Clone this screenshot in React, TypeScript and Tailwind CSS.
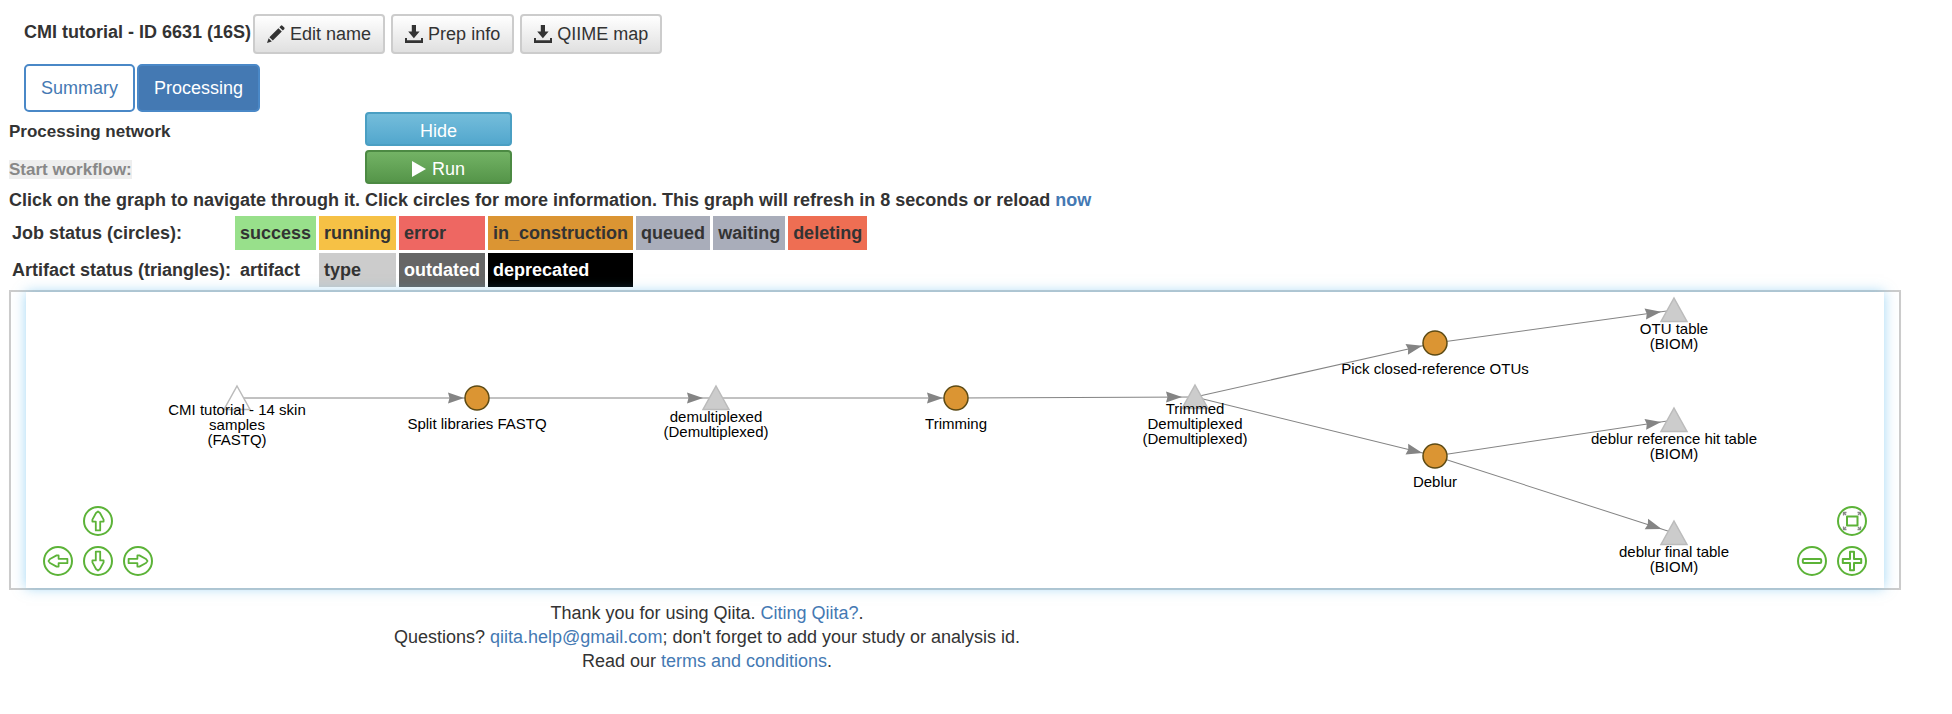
import type { ReactNode } from "react";

type Kind = "job" | "artifact" | "type";

interface GraphNode {
  id: string;
  kind: Kind;
  x: number;
  y: number;
  label: string[];
}

const nodes: GraphNode[] = [
  { id: "fastq", kind: "artifact", x: 211, y: 106, label: ["CMI tutorial - 14 skin", "samples", "(FASTQ)"] },
  { id: "split", kind: "job", x: 451, y: 106, label: ["Split libraries FASTQ"] },
  { id: "demux", kind: "type", x: 690, y: 106, label: ["demultiplexed", "(Demultiplexed)"] },
  { id: "trim", kind: "job", x: 930, y: 106, label: ["Trimming"] },
  { id: "trimmed", kind: "type", x: 1169, y: 105, label: ["Trimmed", "Demultiplexed", "(Demultiplexed)"] },
  { id: "pick", kind: "job", x: 1409, y: 51, label: ["Pick closed-reference OTUs"] },
  { id: "deblur", kind: "job", x: 1409, y: 164, label: ["Deblur"] },
  { id: "otu", kind: "type", x: 1648, y: 18, label: ["OTU table", "(BIOM)"] },
  { id: "hit", kind: "type", x: 1648, y: 128, label: ["deblur reference hit table", "(BIOM)"] },
  { id: "final", kind: "type", x: 1648, y: 241, label: ["deblur final table", "(BIOM)"] },
];

const edges: [string, string][] = [
  ["fastq", "split"],
  ["split", "demux"],
  ["demux", "trim"],
  ["trim", "trimmed"],
  ["trimmed", "pick"],
  ["trimmed", "deblur"],
  ["pick", "otu"],
  ["deblur", "hit"],
  ["deblur", "final"],
];

const byId = (id: string) => nodes.find((n) => n.id === id)!;

function Edge({ from, to }: { from: GraphNode; to: GraphNode }) {
  const dx = to.x - from.x;
  const dy = to.y - from.y;
  const length = Math.hypot(dx, dy);
  const angle = (Math.atan2(dy, dx) * 180) / Math.PI;
  const tip = length - 13;
  return (
    <g transform={`translate(${from.x} ${from.y}) rotate(${angle})`}>
      <line x1="0" y1="0" x2={length} y2="0" stroke="#848484" strokeWidth="1" />
      <path d={`M${tip} 0L${tip - 16} -5.5L${tip - 14.5} 0L${tip - 16} 5.5Z`} fill="#848484" />
    </g>
  );
}

function Node({ node }: { node: GraphNode }) {
  const first = node.kind === "job" ? 31 : node.label.length === 3 ? 17 : 24;
  return (
    <g transform={`translate(${node.x} ${node.y})`}>
      {node.kind === "job" ? (
        <circle r="12" fill="#db9533" stroke="#5c4a14" strokeWidth="1.5" />
      ) : (
        <path
          d="M0 -12L13 11.5H-13Z"
          fill={node.kind === "artifact" ? "#ffffff" : "#cccccc"}
          stroke="#bbbbbb"
          strokeWidth="1.5"
        />
      )}
      {node.label.map((line, i) => (
        <text key={line} x="0" y={first + i * 15} textAnchor="middle" fontSize="15" fill="#000000">
          {line}
        </text>
      ))}
    </g>
  );
}

function NavButton({ label, children }: { label: string; children: ReactNode }) {
  return (
    <button type="button" aria-label={label} className="block size-[30px] cursor-pointer">
      <svg viewBox="0 0 30 30" className="block size-full" fill="none" stroke="#5cb338" strokeWidth="2" strokeLinejoin="round">
        <circle cx="15" cy="15" r="14" />
        {children}
      </svg>
    </button>
  );
}

function Arrow({ turn }: { turn: number }) {
  return (
    <path
      transform={`rotate(${turn} 15 15)`}
      d="M15 5.5L17 7L20.6 13.6V15.6H17.2V24.4H12.8V15.6H9.4V13.6L13 7Z"
      strokeWidth="1.8"
    />
  );
}

function PencilIcon() {
  return (
    <svg viewBox="0 0 18 18" className="size-[18px]" fill="currentColor" aria-hidden="true">
      <path d="M0 18L1.6 13.2L4.8 16.4ZM2.4 12.2L11.4 3.2L14.8 6.6L5.8 15.6ZM12.4 2.2L13.8.8Q14.6 0 15.4.7L17.3 2.6Q18 3.4 17.2 4.2L15.8 5.6Z" />
    </svg>
  );
}

function DownloadIcon() {
  return (
    <svg viewBox="0 0 18 18" className="size-[18px]" fill="currentColor" aria-hidden="true">
      <path d="M6.8 0H11V6.5H14.6L8.9 13.2L3.2 6.5H6.8ZM0 13H2V15.2H16V13H18V18H0Z" />
    </svg>
  );
}

function ToolButton({ icon, children }: { icon: ReactNode; children: ReactNode }) {
  return (
    <button
      type="button"
      className="flex h-10 cursor-pointer items-center gap-[5px] rounded-[4px] border-2 border-[#cccccc] bg-linear-to-b from-white to-[#e0e0e0] px-3 whitespace-nowrap"
    >
      {icon}
      {children}
    </button>
  );
}

export default function App() {
  return (
    <div className="bg-white pt-[14px] font-['Liberation_Sans',Arial,sans-serif] text-[18px] leading-6 text-[#333333]">
      <header className="flex flex-wrap items-center gap-[2px] pl-6">
        <h1 className="-mt-1 font-bold text-[#333333]">CMI tutorial - ID 6631 (16S)</h1>
        <div className="flex flex-wrap gap-[6px]">
          <ToolButton icon={<PencilIcon />}>Edit name</ToolButton>
          <ToolButton icon={<DownloadIcon />}>Prep info</ToolButton>
          <ToolButton icon={<DownloadIcon />}>QIIME map</ToolButton>
        </div>
      </header>

      <nav className="mt-[10px] flex gap-[2px] pl-6">
        <button type="button" className="h-12 cursor-pointer rounded-[5px] border-2 border-[#4a88c7] bg-white px-[15px] text-[#4479b3]">
          Summary
        </button>
        <button type="button" className="h-12 cursor-pointer rounded-[5px] border-2 border-[#4a88c7] bg-[#4479b3] px-[15px] text-white">
          Processing
        </button>
      </nav>

      <main className="pr-[51px] pl-[9px]">
        <div className="grid grid-cols-[356px_147px] items-center gap-y-1">
          <div className="pt-[6px] text-[17px] font-bold">Processing network</div>
          <button type="button" className="h-[34px] cursor-pointer rounded-[4px] border-2 border-[#4a9fc3] bg-linear-to-b from-[#74bddb] to-[#52a7cd] pt-1 text-white">
            Hide
          </button>
          <div className="pt-[6px] text-[17px] leading-[22px] font-bold text-[#888888]">
            <span className="bg-[#eeeeee]">Start workflow:</span>
          </div>
          <button type="button" className="flex h-[34px] cursor-pointer items-center justify-center gap-[6px] rounded-[4px] border-2 border-[#4c8a43] bg-linear-to-b from-[#73b365] to-[#559549] pt-1 text-white">
            <svg viewBox="0 0 14 16" className="h-4 w-[14px]" fill="currentColor" aria-hidden="true">
              <path d="M0 0L14 8L0 16Z" />
            </svg>
            Run
          </button>
        </div>

        <p className="mt-1 font-bold">
          Click on the graph to navigate through it. Click circles for more information. This graph will refresh in 8
          seconds or reload{" "}
          <a href="#reload" className="text-[#4479b3]">
            now
          </a>
        </p>

        <table className="mt-px border-separate border-spacing-[3px] text-left font-bold whitespace-nowrap [&_td]:h-[34px] [&_td]:px-[5px] [&_th]:pr-px">
          <tbody>
            <tr>
              <th scope="row">Job status (circles):</th>
              <td className="bg-[#98e08b]">success</td>
              <td className="bg-[#f6c145]">running</td>
              <td className="bg-[#ee6762]">error</td>
              <td className="bg-[#db9533]">in_construction</td>
              <td className="bg-[#a9adba]">queued</td>
              <td className="bg-[#a9adba]">waiting</td>
              <td className="bg-[#ee6e53]">deleting</td>
            </tr>
            <tr>
              <th scope="row">Artifact status (triangles):</th>
              <td>artifact</td>
              <td className="bg-[#cccccc]">type</td>
              <td className="bg-[#666666] text-white">outdated</td>
              <td className="bg-black text-white">deprecated</td>
            </tr>
          </tbody>
        </table>

        <section aria-label="Processing network graph" className="border-2 border-[#cccccc] px-[15px]">
          <div className="relative shadow-[0_0_12px_rgba(70,175,235,0.5)]">
            <svg viewBox="0 0 1858 296" className="block w-full" fontFamily="'Liberation Sans', Arial, sans-serif">
              {edges.map(([a, b]) => (
                <Edge key={a + b} from={byId(a)} to={byId(b)} />
              ))}
              {nodes.map((n) => (
                <Node key={n.id} node={n} />
              ))}
            </svg>
            <div className="absolute bottom-3 left-[17px] grid grid-cols-3 gap-[10px]">
              <div className="col-start-2 row-start-1">
                <NavButton label="Move up">
                  <Arrow turn={0} />
                </NavButton>
              </div>
              <div className="col-start-1 row-start-2">
                <NavButton label="Move left">
                  <Arrow turn={-90} />
                </NavButton>
              </div>
              <div className="col-start-2 row-start-2">
                <NavButton label="Move down">
                  <Arrow turn={180} />
                </NavButton>
              </div>
              <div className="col-start-3 row-start-2">
                <NavButton label="Move right">
                  <Arrow turn={90} />
                </NavButton>
              </div>
            </div>
            <div className="absolute right-[17px] bottom-3 grid grid-cols-2 gap-[10px]">
              <div className="col-start-2">
                <NavButton label="Fit graph">
                  <rect x="10" y="10.5" width="10.5" height="9" strokeWidth="2" />
                  <path
                    d="M9 9L6.5 6.5M6.5 9.5V6.5H9.5M21 9L23.5 6.5M20.5 6.5H23.5V9.5M9 21L6.5 23.5M6.5 20.5V23.5H9.5M21 21L23.5 23.5M23.5 20.5V23.5H20.5"
                    stroke="#888888"
                    strokeWidth="1.3"
                  />
                </NavButton>
              </div>
              <NavButton label="Zoom out">
                <rect x="5.8" y="13" width="18.4" height="4" rx="1" />
              </NavButton>
              <NavButton label="Zoom in">
                <path d="M13 5.8H17V13H24.2V17H17V24.2H13V17H5.8V13H13Z" />
              </NavButton>
            </div>
          </div>
        </section>
      </main>

      <footer className="mt-[11px] w-full max-w-[1414px] text-center">
        <p>
          Thank you for using Qiita.{" "}
          <a href="#cite" className="text-[#4479b3]">
            Citing Qiita?
          </a>
          .
        </p>
        <p>
          Questions?{" "}
          <a href="mailto:qiita.help@gmail.com" className="text-[#4479b3]">
            qiita.help@gmail.com
          </a>
          ; don't forget to add your study or analysis id.
        </p>
        <p>
          Read our{" "}
          <a href="#terms" className="text-[#4479b3]">
            terms and conditions
          </a>
          .
        </p>
      </footer>
    </div>
  );
}
